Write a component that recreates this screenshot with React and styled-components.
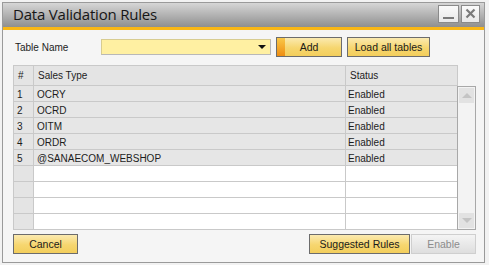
import React from "react";
import styled, { createGlobalStyle, css } from "styled-components";

const Global = createGlobalStyle`
  html, body { margin: 0; padding: 0; background: #f2f2f2; }
  body { font-family: "Liberation Sans", Arial, sans-serif; font-size: 10px; color: #1c1c1c; }
  * { box-sizing: border-box; }
`;

const Window = styled.div`
  margin: 2px;
  width: 483px;
  height: 261px;
  border: 1px solid #9a9a9a;
  display: flex;
  flex-direction: column;
  background: #f5f5f5;
`;

const TitleBar = styled.div`
  height: 27px;
  flex: none;
  display: flex;
  align-items: center;
  padding: 0 4px 3px 10px;
  background: linear-gradient(#d6d6d6, #8f8f8f);
  border-bottom: 3px solid #f9b716;
`;

const Title = styled.div`
  flex: 1;
  font-family: "Open Sans", "Noto Sans", sans-serif;
  font-size: 15px;
  color: #161616;
  letter-spacing: -0.2px;
  padding-top: 1px;
`;

const WinButton = styled.div`
  width: ${(p) => p.$w}px;
  height: 18px;
  margin-left: 2px;
  background: linear-gradient(#fafafa, #e8e8e8);
  border: 1px solid #8a8a8a;
  display: flex;
  align-items: center;
  justify-content: center;
`;

const Content = styled.div`
  flex: 1;
  display: flex;
  flex-direction: column;
  padding: 7px 8px 8px 10px;
`;

const TopRow = styled.div`
  display: flex;
  align-items: center;
  height: 20px;
`;

const Label = styled.div`
  width: 86px;
  margin-left: 2px;
`;

const Combo = styled.div`
  width: 170px;
  height: 16px;
  background: #fff0a2;
  border: 1px solid #d8cc90;
  border-right-color: #b8b8b8;
  border-bottom-color: #b8b8b8;
  display: flex;
  justify-content: flex-end;
  align-items: center;
  padding-right: 4px;
`;

const Arrow = styled.div`
  width: 0;
  height: 0;
  border-left: 4px solid transparent;
  border-right: 4px solid transparent;
  border-top: 4px solid #111;
`;

const Button = styled.button`
  width: ${(p) => p.$w}px;
  height: 20px;
  margin-left: ${(p) => p.$ml || 0}px;
  padding: 0;
  font-family: "Liberation Sans", Arial, sans-serif;
  font-size: 10.5px;
  color: #1a1a1a;
  border: 1px solid #6c6c6c;
  background: linear-gradient(#fbeab0, #f6d66f 55%, #f3ce5c);
  display: flex;
  align-items: center;
  justify-content: center;
  ${(p) =>
    p.$focus &&
    css`
      background: linear-gradient(#f9c848, #ef8d12) 0 0 / 8px 100% no-repeat,
        linear-gradient(#fbeab0, #f6d66f 55%, #f3ce5c);
    `}
  ${(p) =>
    p.$disabled &&
    css`
      color: #8c8c8c;
      border-color: #cfcfcf;
      background: linear-gradient(#f4f4f4, #dedede);
    `}
`;

const TableArea = styled.div`
  margin-top: 8px;
  display: flex;
  flex-direction: column;
`;

const GridRow = styled.div`
  display: grid;
  grid-template-columns: 20px 312px 112px;
  width: 445px;
  border-left: 1px solid #c9c9c9;
  ${(p) => p.$first && css`border-top: 1px solid #c9c9c9;`}
`;

const Cell = styled.div`
  height: ${(p) => (p.$head ? 20 : 16)}px;
  border-right: 1px solid #c9c9c9;
  border-bottom: 1px solid #c9c9c9;
  padding-left: ${(p) => p.$pl || 3}px;
  display: flex;
  align-items: center;
  padding-top: ${(p) => (p.$head ? 0 : 1)}px;
  background: ${(p) => p.$bg};
  white-space: nowrap;
`;

const BodyWrap = styled.div`
  display: flex;
`;

const Rows = styled.div`
  display: flex;
  flex-direction: column;
`;

const Scrollbar = styled.div`
  width: 19px;
  margin-left: -1px;
  border: 1px solid #a8a8a8;
  background: #f3f3f3;
  display: flex;
  flex-direction: column;
  justify-content: space-between;
  padding: 1px;
`;

const ScrollBtn = styled.div`
  height: 15px;
  background: #e2e2e2;
  display: flex;
  align-items: center;
  justify-content: center;
`;

const Tri = styled.div`
  width: 0;
  height: 0;
  border-left: 5px solid transparent;
  border-right: 5px solid transparent;
  ${(p) =>
    p.$down
      ? css`border-top: 5px solid #c4c4c4;`
      : css`border-bottom: 5px solid #c4c4c4;`}
`;

const BottomRow = styled.div`
  margin-top: 4px;
  display: flex;
  align-items: center;
`;

const Spacer = styled.div`
  flex: 1;
`;

const data = [
  ["1", "OCRY", "Enabled"],
  ["2", "OCRD", "Enabled"],
  ["3", "OITM", "Enabled"],
  ["4", "ORDR", "Enabled"],
  ["5", "@SANAECOM_WEBSHOP", "Enabled"],
];

export default function App() {
  const rows = [...data, ...Array.from({ length: 4 }, () => null)];
  return (
    <>
      <Global />
      <Window>
        <TitleBar>
          <Title>Data Validation Rules</Title>
          <WinButton $w={21}>
            <svg width="13" height="12" viewBox="0 0 13 12">
              <rect x="1" y="9" width="11" height="2" fill="#7a7a7a" />
            </svg>
          </WinButton>
          <WinButton $w={19}>
            <svg width="11" height="11" viewBox="0 0 11 11">
              <path d="M1.5 1.5 L9.5 9.5 M9.5 1.5 L1.5 9.5" stroke="#7a7a7a" strokeWidth="2.2" />
            </svg>
          </WinButton>
        </TitleBar>
        <Content>
          <TopRow>
            <Label>Table Name</Label>
            <Combo>
              <Arrow />
            </Combo>
            <Button $w={66} $ml={5} $focus>Add</Button>
            <Button $w={83} $ml={5}>Load all tables</Button>
          </TopRow>
          <TableArea>
            <GridRow $first>
              <Cell $head $bg="#e4e4e4" $pl={4}>#</Cell>
              <Cell $head $bg="#e4e4e4" $pl={4}>Sales Type</Cell>
              <Cell $head $bg="#e4e4e4" $pl={4}>Status</Cell>
            </GridRow>
            <BodyWrap>
              <Rows>
                {rows.map((r, i) => (
                  <GridRow key={i}>
                    <Cell $bg="#e4e4e4">{r ? r[0] : ""}</Cell>
                    <Cell $bg={r ? "#e6e6e6" : "#ffffff"}>{r ? r[1] : ""}</Cell>
                    <Cell $bg={r ? "#e6e6e6" : "#ffffff"} $pl={2}>{r ? r[2] : ""}</Cell>
                  </GridRow>
                ))}
              </Rows>
              <Scrollbar>
                <ScrollBtn>
                  <Tri />
                </ScrollBtn>
                <ScrollBtn>
                  <Tri $down />
                </ScrollBtn>
              </Scrollbar>
            </BodyWrap>
          </TableArea>
          <BottomRow>
            <Button $w={65}>Cancel</Button>
            <Spacer />
            <Button $w={101}>Suggested Rules</Button>
            <Button $w={65} $ml={1} $disabled>Enable</Button>
          </BottomRow>
        </Content>
      </Window>
    </>
  );
}
